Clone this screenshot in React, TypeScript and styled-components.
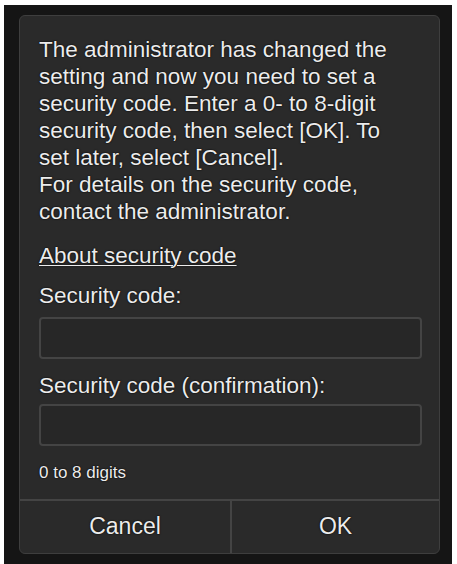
import React from 'react';
import styled, { createGlobalStyle } from 'styled-components';

const GlobalStyle = createGlobalStyle`
  html, body {
    margin: 0;
    padding: 0;
    background: #ffffff;
  }
  body {
    font-family: "Liberation Sans", Arial, sans-serif;
  }
`;

const Page = styled.div`
  padding: 5px 0 0 4px;
  width: 457px;
  height: 564px;
  box-sizing: border-box;
  overflow: hidden;
`;

const Frame = styled.div`
  width: 448px;
  height: 559px;
  box-sizing: border-box;
  background: #151515;
  padding: 10px 0 0 15px;
`;

const Panel = styled.div`
  width: 421px;
  height: 539px;
  box-sizing: border-box;
  background: #2a2a2a;
  border: 1px solid #3e3e3e;
  border-radius: 6px;
  display: flex;
  flex-direction: column;
  overflow: hidden;
`;

const Body = styled.div`
  flex: 1;
  padding: 20px 17px 0 19px;
  color: #ececec;
  text-shadow: 0 0 1px #000, 0 0 2px rgba(0, 0, 0, 0.7);
`;

const Message = styled.p`
  margin: 0;
  font-size: 22.5px;
  line-height: 27px;
  white-space: nowrap;
`;

const Link = styled.a`
  display: block;
  margin-top: 17px;
  font-size: 22.5px;
  line-height: 27px;
  color: #ececec;
  text-decoration: underline;
  text-decoration-thickness: 1px;
  text-underline-offset: 2px;
`;

const Label = styled.div<{ $gap: number }>`
  margin-top: ${(p) => p.$gap}px;
  font-size: 22.5px;
  line-height: 27px;
`;

const Field = styled.div<{ $gap: number }>`
  margin-top: ${(p) => p.$gap}px;
  height: 42px;
  box-sizing: border-box;
  background: #272727;
  border: 2px solid #444444;
  border-radius: 4px;
`;

const Hint = styled.div`
  margin-top: 17px;
  font-size: 17px;
  line-height: 20px;
`;

const Footer = styled.div`
  display: grid;
  grid-template-columns: 210px 1fr;
  height: 52px;
  border-top: 2px solid #444444;
`;

const FooterButton = styled.button<{ $divider?: boolean }>`
  background: transparent;
  border: none;
  border-left: ${(p) => (p.$divider ? '2px solid #444444' : 'none')};
  color: #ececec;
  text-shadow: 0 0 1px #000, 0 0 2px rgba(0, 0, 0, 0.7);
  font-family: "Liberation Sans", Arial, sans-serif;
  font-size: 23px;
  padding: 0 0 2px;
  cursor: pointer;
`;

export default function App() {
  return (
    <>
      <GlobalStyle />
      <Page>
        <Frame>
          <Panel>
            <Body>
              <Message>
                The administrator has changed the
                <br />
                setting and now you need to set a
                <br />
                security code. Enter a 0- to 8-digit
                <br />
                security code, then select [OK]. To
                <br />
                set later, select [Cancel].
                <br />
                For details on the security code,
                <br />
                contact the administrator.
              </Message>
              <Link href="#">About security code</Link>
              <Label $gap={13}>Security code:</Label>
              <Field $gap={8} />
              <Label $gap={13}>Security code (confirmation):</Label>
              <Field $gap={5} />
              <Hint>0 to 8 digits</Hint>
            </Body>
            <Footer>
              <FooterButton>Cancel</FooterButton>
              <FooterButton $divider>OK</FooterButton>
            </Footer>
          </Panel>
        </Frame>
      </Page>
    </>
  );
}
